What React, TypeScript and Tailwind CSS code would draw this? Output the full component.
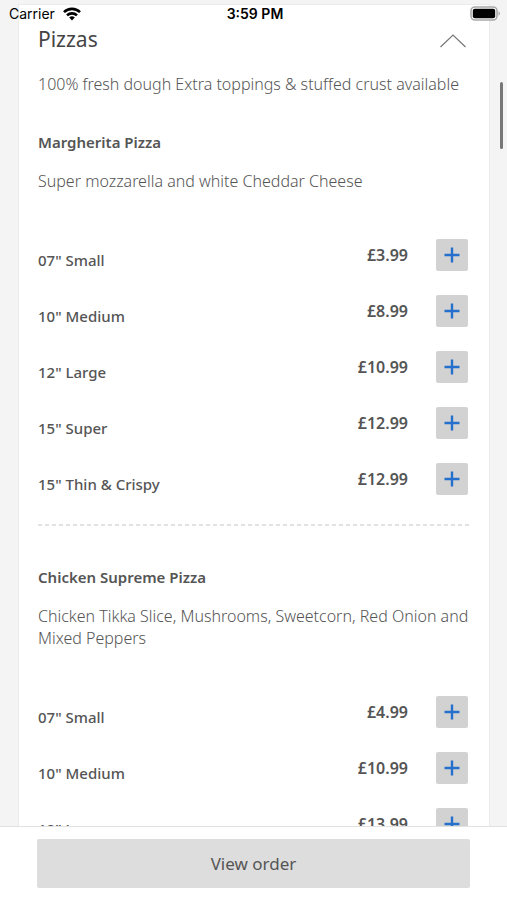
import React from 'react';

interface Size {
  label: string;
  price: string;
}

interface Pizza {
  name: string;
  description: string;
  sizes: Size[];
}

const pizzas: Pizza[] = [
  {
    name: 'Margherita Pizza',
    description: 'Super mozzarella and white Cheddar Cheese',
    sizes: [
      { label: '07" Small', price: '£3.99' },
      { label: '10" Medium', price: '£8.99' },
      { label: '12" Large', price: '£10.99' },
      { label: '15" Super', price: '£12.99' },
      { label: '15" Thin & Crispy', price: '£12.99' },
    ],
  },
  {
    name: 'Chicken Supreme Pizza',
    description: 'Chicken Tikka Slice, Mushrooms, Sweetcorn, Red Onion and Mixed Peppers',
    sizes: [
      { label: '07" Small', price: '£4.99' },
      { label: '10" Medium', price: '£10.99' },
      { label: '12" Large', price: '£13.99' },
    ],
  },
];

function StatusBar() {
  return (
    <div className="absolute inset-x-0 top-0 z-10 grid h-[27px] grid-cols-3 items-center pl-[9px] pr-[6px] font-['Inter','Liberation_Sans',sans-serif] text-[14px] text-black">
      <div className="flex items-center gap-2">
        <span>Carrier</span>
        <svg width="18" height="14" viewBox="0 0 18 14" fill="none" stroke="black" strokeWidth="2.6">
          <path d="M1 5.2a11.3 11.3 0 0 1 16 0" />
          <path d="M4 8.4a7.1 7.1 0 0 1 10 0" />
          <path d="M9 13.4 6.2 10.5a4 4 0 0 1 5.6 0z" fill="black" stroke="none" />
        </svg>
      </div>
      <span className="text-center font-semibold">3:59 PM</span>
      <svg className="justify-self-end" width="31" height="15" viewBox="0 0 31 15">
        <rect x="1" y="1" width="26" height="13" rx="4" fill="white" stroke="#a8a8a8" strokeWidth="1.6" />
        <rect x="2.8" y="2.8" width="22.4" height="9.4" rx="2" fill="black" />
        <path d="M28.5 5.3v4.4c2-.8 2-3.6 0-4.4z" fill="#a8a8a8" />
      </svg>
    </div>
  );
}

function SizeRow({ label, price }: Size) {
  return (
    <li className="flex h-8 items-center pr-[3px] font-medium text-[#555]">
      <span className="flex-1 pt-[10px] text-[15px]">{label}</span>
      <span className="mr-7 font-semibold">{price}</span>
      <button
        type="button"
        aria-label={`Add ${label}`}
        className="flex h-8 w-8 items-center justify-center rounded-xs bg-[#d2d2d2]"
      >
        <svg width="16" height="16" viewBox="0 0 16 16" stroke="#2470cc" strokeWidth="2.4">
          <path d="M8 .5v15M.5 8h15" />
        </svg>
      </button>
    </li>
  );
}

export default function App() {
  return (
    <div className="relative flex h-screen flex-col overflow-hidden bg-[#f4f4f4] font-['Noto_Sans','Open_Sans',sans-serif] text-[16px] leading-[22px] text-[#555]">
      <StatusBar />

      <main className="min-h-0 flex-1 overflow-hidden pl-[18px] pr-[17px] pt-1">
        <section className="border border-[#ebebeb] bg-white pb-8 pl-[19px] pr-[18px] pt-5">
          <div className="flex items-center justify-between">
            <h1 className="text-[21px] leading-7 text-[#444]">Pizzas</h1>
            <button type="button" aria-label="Collapse Pizzas" className="mr-1 pt-1">
              <svg width="28" height="14" viewBox="0 0 28 14" fill="none" stroke="#777" strokeWidth="1.2">
                <path d="M1.5 13 14 1l12.5 12" />
              </svg>
            </button>
          </div>
          <p className="mt-5 font-light">100% fresh dough Extra toppings &amp; stuffed crust available</p>

          {/* Menu items */}
          {pizzas.map((pizza, index) => (
            <div key={pizza.name}>
              {index > 0 && (
                <div className="mt-[29px] h-[2px] bg-[repeating-linear-gradient(90deg,#e2e2e2_0_4px,transparent_4px_7px)]" />
              )}
              <div className={index > 0 ? 'pt-10' : 'pt-9'}>
                <h2 className="text-[15px] font-semibold">{pizza.name}</h2>
                <p className="mt-[17px] font-light">{pizza.description}</p>
                <ul className="mt-[47px] flex flex-col gap-6">
                  {pizza.sizes.map((size) => (
                    <SizeRow key={size.label} {...size} />
                  ))}
                </ul>
              </div>
            </div>
          ))}
        </section>
      </main>

      {/* Scroll position */}
      <div className="absolute right-1 top-[82px] h-[67px] w-[3px] rounded-full bg-[#777]" />

      <footer className="border-t border-[#e2e2e2] bg-white px-[37px] py-3">
        <button type="button" className="h-[49px] w-full rounded-xs bg-[#ddd] text-[17px]">
          View order
        </button>
      </footer>
    </div>
  );
}
